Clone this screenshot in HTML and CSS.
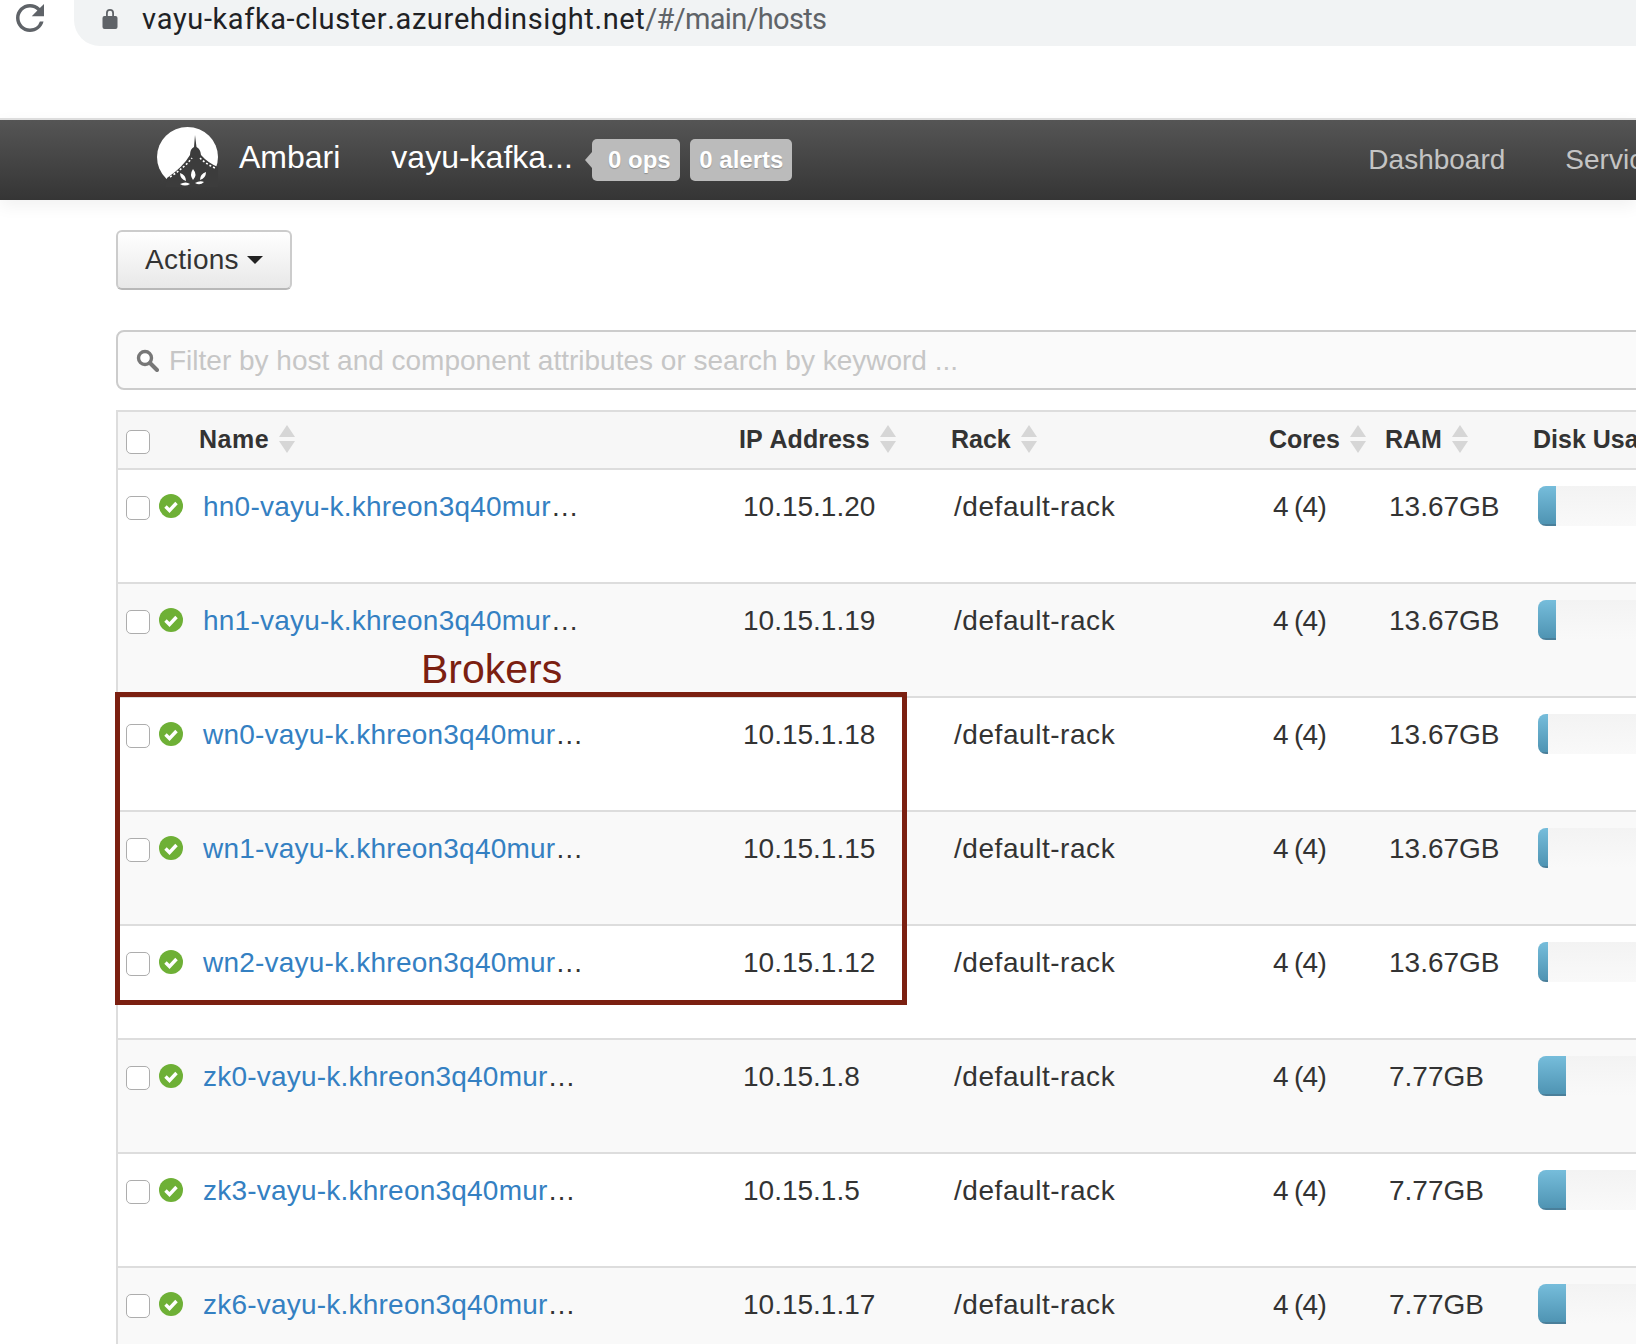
FILE: index.html
```html
<!DOCTYPE html>
<html lang="en">
<head>
<meta charset="UTF-8" />
<meta name="viewport" content="width=device-width, initial-scale=1" />
<title>Ambari - Hosts</title>
<link rel="stylesheet" href="styles.css">
</head>
<body>
  <div class="browser-bar">
    <svg class="reload" viewBox="4 4 16 16" aria-hidden="true"><path d="M17.65 6.35A7.958 7.958 0 0 0 12 4c-4.42 0-7.99 3.58-7.99 8s3.57 8 7.99 8c3.73 0 6.84-2.55 7.73-6h-2.08A5.99 5.99 0 0 1 12 18c-3.31 0-6-2.69-6-6s2.69-6 6-6c1.66 0 3.14.69 4.22 1.78L13 11h7V4l-2.35 2.35z"/></svg>
    <div class="url-bar">
      <svg class="lock" viewBox="0 0 16 21" aria-hidden="true"><path d="M4 9V5a4 4 0 0 1 8 0v4h-1.8V5a2.2 2.2 0 0 0-4.4 0v4z"/><rect x="0.5" y="8" width="15" height="13" rx="2"/></svg>
      <span class="url"><span class="url-host">vayu-kafka-cluster.azurehdinsight.net</span>/#/main/hosts</span>
    </div>
  </div>

  <nav class="navbar">
    <svg class="logo" viewBox="0 0 61 60" aria-hidden="true">
      <ellipse cx="30.5" cy="30" rx="30.5" ry="30" fill="#fff"/>
      <path fill="#3c3c3c" d="M38 8l1.500 12q4 2 4.500 8q7 8 17 12v20H8l2-9Q26 40 33 28q0-6 4-8z"/>
      <path fill="none" stroke="#fff" stroke-width="1.6" stroke-dasharray="2 2" d="M13 50Q27 41 35 31M43 31q6 6 15 10"/>
      <path fill="#fff" d="M36 53q-4-5 0-11q5 6 0 11zM29 54q-6-2-6-8q6 2 6 8zM43 53q0-6 6-8q0 6-6 8zM23 57q6-3 10 0q-5 3-10 0zM38 56q5-3 9-1q-4 4-9 1z"/>
    </svg>
    <a class="brand">Ambari</a>
    <a class="cluster">vayu-kafka...</a>
    <span class="badge badge-ops">0 ops</span>
    <span class="badge badge-alerts">0 alerts</span>
    <a class="nav-link nav-first">Dashboard</a>
    <a class="nav-link">Services</a>
  </nav>

  <main class="content">
    <button class="actions-btn" type="button">Actions<span class="caret"></span></button>

    <div class="filter">
      <svg class="search-icon" viewBox="0 0 23 23" aria-hidden="true"><circle cx="9" cy="9" r="6.5" fill="#fff" stroke="#777" stroke-width="3.4"/><path d="M14 14l7 7" stroke="#777" stroke-width="4" stroke-linecap="round"/></svg>
      <span class="filter-text">Filter by host and component attributes or search by keyword ...</span>
    </div>

    <table class="hosts">
      <colgroup>
        <col class="col-check"><col class="col-name"><col class="col-ip"><col class="col-rack"><col class="col-cores"><col class="col-ram"><col class="col-disk">
      </colgroup>
      <thead>
        <tr>
          <th class="cell-check"><input class="check" type="checkbox"></th>
          <th class="th-name"><span class="th-inner">Name<span class="sort"></span></span></th>
          <th><span class="th-inner">IP Address<span class="sort"></span></span></th>
          <th><span class="th-inner">Rack<span class="sort"></span></span></th>
          <th><span class="th-inner">Cores<span class="sort"></span></span></th>
          <th class="th-ram"><span class="th-inner">RAM<span class="sort"></span></span></th>
          <th><span class="th-inner">Disk Usage</span></th>
        </tr>
      </thead>
      <tbody>
        <tr>
          <td class="cell-check"><input class="check" type="checkbox"></td>
          <td class="cell-name"><svg class="status" viewBox="0 0 24 24" aria-hidden="true"><circle cx="12" cy="12" r="12"/><path d="M6.5 12.5l4 4 7-7.5"/></svg><a>hn0-vayu-k.khreon3q40mur</a><span class="more">…</span></td>
          <td>10.15.1.20</td><td class="cell-rack">/default-rack</td><td class="cell-cores">4 (4)</td><td class="cell-ram">13.67GB</td>
          <td class="cell-disk"><div class="progress"><div class="bar" style="width:18px"></div></div></td>
        </tr>
        <tr>
          <td class="cell-check"><input class="check" type="checkbox"></td>
          <td class="cell-name"><svg class="status" viewBox="0 0 24 24" aria-hidden="true"><circle cx="12" cy="12" r="12"/><path d="M6.5 12.5l4 4 7-7.5"/></svg><a>hn1-vayu-k.khreon3q40mur</a><span class="more">…</span></td>
          <td>10.15.1.19</td><td class="cell-rack">/default-rack</td><td class="cell-cores">4 (4)</td><td class="cell-ram">13.67GB</td>
          <td class="cell-disk"><div class="progress"><div class="bar" style="width:18px"></div></div></td>
        </tr>
        <tr>
          <td class="cell-check"><input class="check" type="checkbox"></td>
          <td class="cell-name"><svg class="status" viewBox="0 0 24 24" aria-hidden="true"><circle cx="12" cy="12" r="12"/><path d="M6.5 12.5l4 4 7-7.5"/></svg><a>wn0-vayu-k.khreon3q40mur</a><span class="more">…</span></td>
          <td>10.15.1.18</td><td class="cell-rack">/default-rack</td><td class="cell-cores">4 (4)</td><td class="cell-ram">13.67GB</td>
          <td class="cell-disk"><div class="progress"><div class="bar" style="width:10px"></div></div></td>
        </tr>
        <tr>
          <td class="cell-check"><input class="check" type="checkbox"></td>
          <td class="cell-name"><svg class="status" viewBox="0 0 24 24" aria-hidden="true"><circle cx="12" cy="12" r="12"/><path d="M6.5 12.5l4 4 7-7.5"/></svg><a>wn1-vayu-k.khreon3q40mur</a><span class="more">…</span></td>
          <td>10.15.1.15</td><td class="cell-rack">/default-rack</td><td class="cell-cores">4 (4)</td><td class="cell-ram">13.67GB</td>
          <td class="cell-disk"><div class="progress"><div class="bar" style="width:10px"></div></div></td>
        </tr>
        <tr>
          <td class="cell-check"><input class="check" type="checkbox"></td>
          <td class="cell-name"><svg class="status" viewBox="0 0 24 24" aria-hidden="true"><circle cx="12" cy="12" r="12"/><path d="M6.5 12.5l4 4 7-7.5"/></svg><a>wn2-vayu-k.khreon3q40mur</a><span class="more">…</span></td>
          <td>10.15.1.12</td><td class="cell-rack">/default-rack</td><td class="cell-cores">4 (4)</td><td class="cell-ram">13.67GB</td>
          <td class="cell-disk"><div class="progress"><div class="bar" style="width:10px"></div></div></td>
        </tr>
        <tr>
          <td class="cell-check"><input class="check" type="checkbox"></td>
          <td class="cell-name"><svg class="status" viewBox="0 0 24 24" aria-hidden="true"><circle cx="12" cy="12" r="12"/><path d="M6.5 12.5l4 4 7-7.5"/></svg><a>zk0-vayu-k.khreon3q40mur</a><span class="more">…</span></td>
          <td>10.15.1.8</td><td class="cell-rack">/default-rack</td><td class="cell-cores">4 (4)</td><td class="cell-ram">7.77GB</td>
          <td class="cell-disk"><div class="progress"><div class="bar" style="width:28px"></div></div></td>
        </tr>
        <tr>
          <td class="cell-check"><input class="check" type="checkbox"></td>
          <td class="cell-name"><svg class="status" viewBox="0 0 24 24" aria-hidden="true"><circle cx="12" cy="12" r="12"/><path d="M6.5 12.5l4 4 7-7.5"/></svg><a>zk3-vayu-k.khreon3q40mur</a><span class="more">…</span></td>
          <td>10.15.1.5</td><td class="cell-rack">/default-rack</td><td class="cell-cores">4 (4)</td><td class="cell-ram">7.77GB</td>
          <td class="cell-disk"><div class="progress"><div class="bar" style="width:28px"></div></div></td>
        </tr>
        <tr>
          <td class="cell-check"><input class="check" type="checkbox"></td>
          <td class="cell-name"><svg class="status" viewBox="0 0 24 24" aria-hidden="true"><circle cx="12" cy="12" r="12"/><path d="M6.5 12.5l4 4 7-7.5"/></svg><a>zk6-vayu-k.khreon3q40mur</a><span class="more">…</span></td>
          <td>10.15.1.17</td><td class="cell-rack">/default-rack</td><td class="cell-cores">4 (4)</td><td class="cell-ram">7.77GB</td>
          <td class="cell-disk"><div class="progress"><div class="bar" style="width:28px"></div></div></td>
        </tr>
      </tbody>
    </table>
  </main>

  <!-- annotation drawn over the table -->
  <div class="brokers-label">Brokers</div>
  <div class="brokers-box"></div>
</body>
</html>
```

FILE: styles.css
```css
:root {
  --text: #333;
  --link: #3480c2;
  --line: #ddd;
  --stripe: #f9f9f9;
  --annotation: #7b2011;
}

html, body {
  margin: 0;
  padding: 0;
  height: 100%;
  overflow: hidden;
  background: #fff;
  color: var(--text);
  font-family: "Liberation Sans", Arial, sans-serif;
  font-size: 28px;
  font-kerning: none;
}

body {
  position: relative;
}

/* browser chrome */
.browser-bar {
  display: flex;
  height: 46px;
  padding-left: 16px;
}

.reload {
  width: 28px;
  height: 28px;
  margin-top: 4px;
  fill: #5f6368;
  flex: none;
}

.url-bar {
  flex: 1;
  display: flex;
  align-items: center;
  margin-left: 30px;
  padding-left: 28px;
  background: #f1f3f4;
  border-radius: 0 0 0 26px;
}

.lock {
  width: 16px;
  height: 21px;
  margin-top: -9px;
  fill: #5f6368;
  stroke: none;
  flex: none;
}

.url {
  margin-left: 24px;
  margin-top: -8px;
  font-family: Roboto, sans-serif;
  font-size: 29px;
  letter-spacing: -0.7px;
  color: #5f6368;
  white-space: nowrap;
}

.url-host {
  letter-spacing: 0.6px;
  color: #202124;
}

/* ambari navbar */
.navbar {
  display: flex;
  align-items: center;
  box-sizing: border-box;
  width: 1636px;
  height: 82px;
  margin-top: 72px;
  padding-left: 157px;
  border-top: 2px solid #ddd;
  background: linear-gradient(#555, #353535);
  box-shadow: 0 6px 16px rgba(0, 0, 0, 0.06);
  white-space: nowrap;
}

.navbar > * {
  flex: none;
}

.logo {
  width: 61px;
  height: 60px;
  margin-top: -6px;
}

.brand {
  margin-left: 21px;
  margin-top: -6px;
  font-size: 32px;
  color: #fff;
}

.cluster {
  width: 183px;
  margin-left: 51px;
  margin-top: -6px;
  font-size: 32px;
  color: #fff;
}

.badge {
  position: relative;
  box-sizing: border-box;
  height: 42px;
  margin-top: -1px;
  background: #bbb;
  border-radius: 5px;
  color: #fff;
  font-size: 24px;
  font-weight: 700;
  line-height: 42px;
  text-align: center;
  text-shadow: 0 1px 1px rgba(0, 0, 0, 0.25);
}

.badge-ops {
  width: 88px;
  margin-left: 18px;
  padding-left: 6px;
}

.badge-ops::before {
  content: "";
  position: absolute;
  left: -7px;
  top: 13px;
  border-top: 8px solid transparent;
  border-bottom: 8px solid transparent;
  border-right: 7px solid #bbb;
}

.badge-alerts {
  width: 102px;
  margin-left: 10px;
}

.nav-link {
  margin-left: 60px;
  font-size: 28px;
  color: #c4c4c4;
}

.nav-first {
  margin-left: 576px;
}

/* page content */
.content {
  padding-left: 116px;
}

.actions-btn {
  display: flex;
  align-items: center;
  box-sizing: border-box;
  width: 176px;
  height: 60px;
  margin: 30px 0 0;
  padding: 0 0 0 27px;
  background: linear-gradient(#fff, #e8e8e8);
  border: 2px solid #ccc;
  border-bottom-color: #b8b8b8;
  border-radius: 6px;
  color: var(--text);
  font-family: inherit;
  font-size: 28px;
  font-kerning: none;
  letter-spacing: 0.3px;
}

.caret {
  margin-left: 8px;
  border-top: 8px solid #222;
  border-left: 8px solid transparent;
  border-right: 8px solid transparent;
}

.filter {
  display: flex;
  align-items: center;
  box-sizing: border-box;
  width: 1600px;
  height: 60px;
  margin-top: 40px;
  padding-left: 18px;
  background: #fafafa;
  border: 2px solid #ccc;
  border-radius: 8px;
}

.search-icon {
  width: 23px;
  height: 23px;
  flex: none;
}

.filter-text {
  margin-left: 10px;
  padding-top: 2px;
  color: #c6c6c6;
  white-space: nowrap;
}

/* hosts table */
.hosts {
  width: 1600px;
  margin-top: 20px;
  border-collapse: separate;
  border-spacing: 0;
  border-top: 2px solid var(--line);
  border-left: 2px solid var(--line);
  table-layout: fixed;
}

.col-check { width: 39px; }
.col-name { width: 578px; }
.col-ip { width: 212px; }
.col-rack { width: 318px; }
.col-cores { width: 117px; }
.col-ram { width: 147px; }

.hosts th {
  box-sizing: border-box;
  height: 56px;
  padding: 0 0 2px 4px;
  background: #f7f7f7;
  font-size: 25px;
  text-align: left;
  white-space: nowrap;
}

.th-inner {
  display: flex;
  align-items: center;
}

.hosts .th-name {
  padding-left: 42px;
  letter-spacing: 0.5px;
}

.hosts .th-ram {
  padding-left: 3px;
}

.sort {
  display: flex;
  flex-direction: column;
  justify-content: space-between;
  width: 16px;
  height: 28px;
  margin-left: 10px;
  margin-top: -1px;
  flex: none;
}

.sort::before {
  content: "";
  border-bottom: 12px solid #d6d6d6;
  border-left: 8px solid transparent;
  border-right: 8px solid transparent;
}

.sort::after {
  content: "";
  border-top: 12px solid #d6d6d6;
  border-left: 8px solid transparent;
  border-right: 8px solid transparent;
}

.hosts td {
  box-sizing: border-box;
  height: 114px;
  padding: 17px 0 0 8px;
  border-top: 2px solid var(--line);
  line-height: 40px;
  vertical-align: top;
  white-space: nowrap;
}

.hosts tbody tr:nth-child(even) td {
  background: var(--stripe);
}

.hosts .cell-check {
  padding-left: 8px;
  padding-right: 0;
}

.check {
  appearance: none;
  display: block;
  box-sizing: border-box;
  width: 24px;
  height: 24px;
  margin: 0;
  background: #fff;
  border: 1.5px solid #adadad;
  border-radius: 5px;
}

.hosts th.cell-check .check {
  margin-top: 6px;
}

.hosts td.cell-check .check {
  margin-top: 9px;
}

.hosts td.cell-name {
  display: flex;
  padding-left: 2px;
  height: 114px;
}

.status {
  width: 24px;
  height: 24px;
  margin: 7px 20px 0 0;
  flex: none;
  fill: #6eb036;
}

.status path {
  fill: none;
  stroke: #fff;
  stroke-width: 3.4;
}

.cell-name a {
  color: var(--link);
  letter-spacing: 0.22px;
}

.more {
  color: #333;
}

.hosts td.cell-rack {
  padding-left: 7px;
  letter-spacing: 0.55px;
}

.hosts td.cell-cores {
  word-spacing: -1px;
  letter-spacing: -0.7px;
}

.hosts td.cell-ram {
  padding-left: 7px;
}

.hosts td.cell-disk {
  padding-left: 9px;
  padding-top: 16px;
}

.progress {
  height: 40px;
  overflow: hidden;
  background: linear-gradient(#f3f3f3, #f9f9f9);
  border-radius: 8px;
}

.bar {
  box-sizing: border-box;
  height: 100%;
  background: linear-gradient(#76bddb, #4f94b3);
  border-bottom: 2px solid #4a7f9a;
}

/* annotation */
.brokers-label {
  position: absolute;
  left: 421px;
  top: 645px;
  color: var(--annotation);
  font-size: 41px;
  line-height: 48px;
}

.brokers-box {
  position: absolute;
  left: 115px;
  top: 692px;
  box-sizing: border-box;
  width: 792px;
  height: 313px;
  border: 5px solid var(--annotation);
}
```
